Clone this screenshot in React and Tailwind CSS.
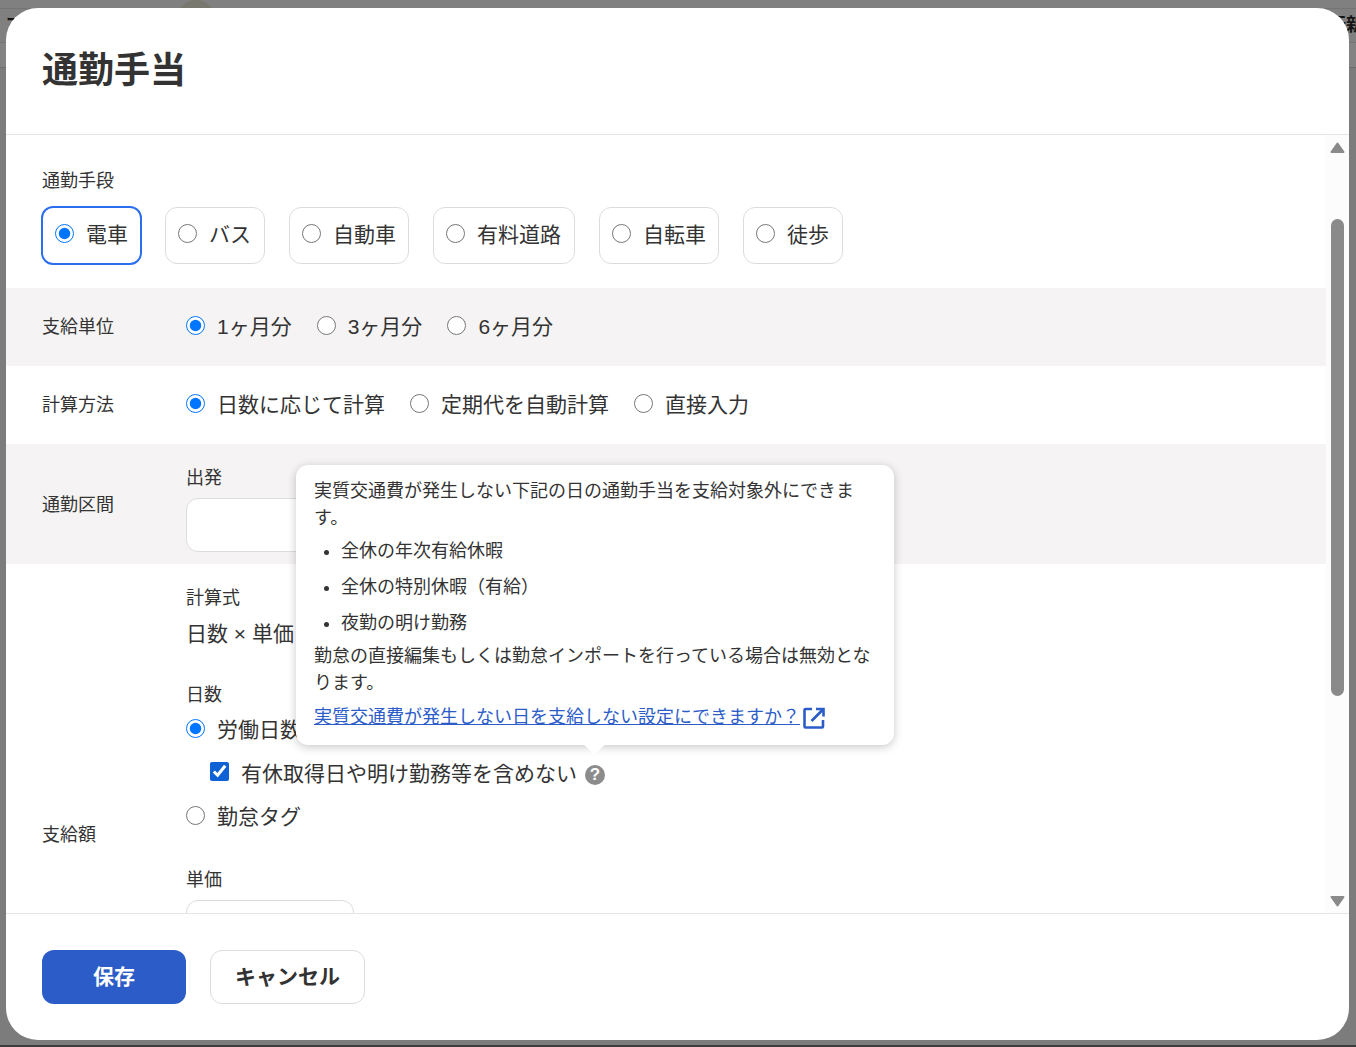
const font = '[font-family:"Liberation_Sans","Noto_Sans_CJK_JP",sans-serif]';

const Radio = ({ checked, className = '' }) => (
  <input
    type="radio"
    checked={!!checked}
    readOnly
    className={`w-[19px] h-[19px] shrink-0 accent-[#0075ff] ${className}`}
  />
);

const RadioChip = ({ label, checked, className }) => (
  <div
    className={`flex items-center rounded-[12px] bg-white ${className} ${
      checked
        ? 'h-[59px] pl-[12px] -ml-[1px] -mr-[1px] border-2 border-[#2b6ef0]'
        : 'h-[57px] pl-[12px] border border-[#dcdcdc]'
    }`}
  >
    <Radio checked={checked} className="mb-[5px]" />
    <span className="ml-[12px] mb-[2px] text-[21px] text-[#333] leading-none">{label}</span>
  </div>
);

const RadioItem = ({ label, checked, gap = 'mr-[25px]' }) => (
  <div className={`flex items-center ${gap}`}>
    <Radio checked={checked} className="mb-[4px]" />
    <span className="ml-[12px] mb-[2px] text-[21px] text-[#333] leading-none">{label}</span>
  </div>
);

const Row = ({ label, shaded, labelClass = '', className, children }) => (
  <div className={`flex items-center pl-[36px] ${shaded ? 'bg-[#f5f3f4]' : 'bg-white'} ${className}`}>
    <div className={`w-[144px] shrink-0 text-[18px] text-[#333] ${labelClass}`}>{label}</div>
    <div className="flex-1">{children}</div>
  </div>
);

const Tooltip = () => (
  <div className="absolute left-[290px] top-[330px] w-[598px] h-[280px] bg-white rounded-[12px] shadow-[0_2px_10px_rgba(0,0,0,0.22)] px-[18px] pt-[13px] text-[18px] leading-[27px] text-[#333]">
    <p>実質交通費が発生しない下記の日の通勤手当を支給対象外にできます。</p>
    <ul className="list-disc pl-[27px] mt-[6px] mb-[6px]">
      <li className="mb-[9px]">全休の年次有給休暇</li>
      <li className="mb-[9px]">全休の特別休暇（有給）</li>
      <li>夜勤の明け勤務</li>
    </ul>
    <p>勤怠の直接編集もしくは勤怠インポートを行っている場合は無効となります。</p>
    <div className="flex items-center mt-[7px]">
      <a href="#" className="text-[#2b5cc8] underline">実質交通費が発生しない日を支給しない設定にできますか？</a>
      <svg width="24" height="24" viewBox="0 0 24 24" fill="none" stroke="#2b5cc8" strokeWidth="2.6" className="ml-[2px] mt-[1px]">
        <path d="M10 3H3.500a1 1 0 0 0-1 1V20.500a1 1 0 0 0 1 1H20a1 1 0 0 0 1-1V14" />
        <path d="M14 3H21.500V10.500M21 3.500 9.500 15" />
      </svg>
    </div>
    <span className="absolute left-[291px] bottom-[-7px] w-[15px] h-[15px] bg-white rotate-45" />
  </div>
);

// the page under the dimmed overlay, only its edges show around the modal
const Backdrop = () => (
  <div className="h-[1047px] flex flex-col bg-[#7c7c7c]">
    <div className="h-[8px] bg-[#808080] flex shrink-0">
      <span className="ml-[178px] w-[36px] h-[36px] rounded-full bg-[#78786f]" />
    </div>
    <div className="h-[35px] bg-[#808080] border-t border-b border-[#747474] flex justify-between items-center text-[18px] font-bold text-[#151515] shrink-0">
      <span className="ml-[6px]">マ</span>
      <span className="whitespace-nowrap -mr-[8px]">転新</span>
    </div>
    <div className="h-[25px] bg-[#838383] border-b border-[#6e6e6e] shrink-0" />
    <div className="flex-1" />
    <div className="h-[2px] bg-[#3c3c3c] shrink-0" />
  </div>
);

export default function App() {
  return (
    <div className={`relative w-[1356px] h-[1047px] overflow-hidden ${font}`}>
      <Backdrop />

      <div className="absolute left-[6px] top-[8px] w-[1343px] h-[1032px] bg-white rounded-[32px] overflow-hidden flex flex-col">
        {/* Header */}
        <div className="h-[127px] shrink-0 border-b border-[#e5e5e5] pl-[36px] pt-[36px]">
          <h1 className="text-[36px] leading-[54px] font-bold text-[#333]">通勤手当</h1>
        </div>

        {/* Body */}
        <div className="relative flex-1 min-h-0 flex overflow-hidden">
          <div className="flex-1 min-w-0 h-full overflow-hidden">
            <div className="h-[153px] pl-[36px] pt-[33px] bg-white">
              <div className="text-[18px] leading-[27px] text-[#333] mb-[11px]">通勤手段</div>
              <div className="flex items-center gap-[24px]">
                <RadioChip label="電車" checked className="w-[101px]" />
                <RadioChip label="バス" className="w-[100px]" />
                <RadioChip label="自動車" className="w-[120px]" />
                <RadioChip label="有料道路" className="w-[142px]" />
                <RadioChip label="自転車" className="w-[120px]" />
                <RadioChip label="徒歩" className="w-[100px]" />
              </div>
            </div>

            <Row label="支給単位" shaded className="h-[78px]">
              <div className="flex">
                <RadioItem label="1ヶ月分" checked />
                <RadioItem label="3ヶ月分" />
                <RadioItem label="6ヶ月分" />
              </div>
            </Row>

            <Row label="計算方法" className="h-[78px]">
              <div className="flex">
                <RadioItem label="日数に応じて計算" checked />
                <RadioItem label="定期代を自動計算" />
                <RadioItem label="直接入力" />
              </div>
            </Row>

            <Row label="通勤区間" shaded labelClass="pt-[2px]" className="h-[120px]">
              <div className="pt-[9px]">
                <div className="text-[18px] leading-[27px] text-[#333] mb-[6px]">出発</div>
                <div className="w-[168px] h-[54px] rounded-[12px] border border-[#dcdcdc] bg-white" />
              </div>
            </Row>

            <Row label="支給額" labelClass="pt-[2px]" className="h-[540px]">
              <div className="h-[540px] pt-[21px]">
                <div className="text-[18px] leading-[27px] text-[#333]">計算式</div>
                <div className="text-[21px] leading-[32px] text-[#333] mt-[6px]">日数 × 単価</div>
                <div className="text-[18px] leading-[27px] text-[#333] mt-[32px]">日数</div>
                <div className="mt-[10px]"><RadioItem label="労働日数" checked /></div>
                <div className="flex items-center ml-[24px] mt-[20px]">
                  <input type="checkbox" checked readOnly className="w-[19px] h-[19px] accent-[#0f62d6] mb-[4px]" />
                  <span className="ml-[12px] text-[21px] leading-none text-[#333]">有休取得日や明け勤務等を含めない</span>
                  <span className="ml-[8px] mt-[2px] w-[20px] h-[20px] rounded-full bg-[#8c8c8c] text-white text-[17px] font-bold flex items-center justify-center leading-none">?</span>
                </div>
                <div className="mt-[21px]"><RadioItem label="勤怠タグ" /></div>
                <div className="text-[18px] leading-[27px] text-[#333] mt-[38px]">単価</div>
                <div className="w-[168px] h-[54px] rounded-[12px] border border-[#dcdcdc] mt-[6px]" />
              </div>
            </Row>
          </div>

          {/* Scrollbar */}
          <div className="relative w-[23px] h-full bg-[#fcfcfc] shrink-0">
            <svg width="15" height="11" viewBox="0 0 15 11" className="absolute left-[4px] top-[7px]" fill="#8a8a8a">
              <path d="M7.500 1.500 13.500 10H1.500Z" strokeLinejoin="round" strokeWidth="2" stroke="#8a8a8a" />
            </svg>
            <div className="absolute left-[5px] top-[84px] w-[13px] h-[477px] rounded-full bg-[#8a8a8a]" />
            <svg width="15" height="11" viewBox="0 0 15 11" className="absolute left-[4px] bottom-[6px]" fill="#8a8a8a">
              <path d="M7.500 9.500 13.500 1H1.500Z" strokeLinejoin="round" strokeWidth="2" stroke="#8a8a8a" />
            </svg>
          </div>

          <Tooltip />
        </div>

        {/* Footer */}
        <div className="h-[127px] shrink-0 border-t border-[#e5e5e5] pl-[36px] pt-[36px] flex gap-[24px]">
          <button className="w-[144px] h-[54px] rounded-[12px] bg-[#2b5cc8] text-white text-[21px] font-bold">保存</button>
          <button className="w-[155px] h-[54px] rounded-[12px] bg-white border border-[#dcdcdc] text-[#333] text-[21px] font-bold">キャンセル</button>
        </div>
      </div>
    </div>
  );
}
